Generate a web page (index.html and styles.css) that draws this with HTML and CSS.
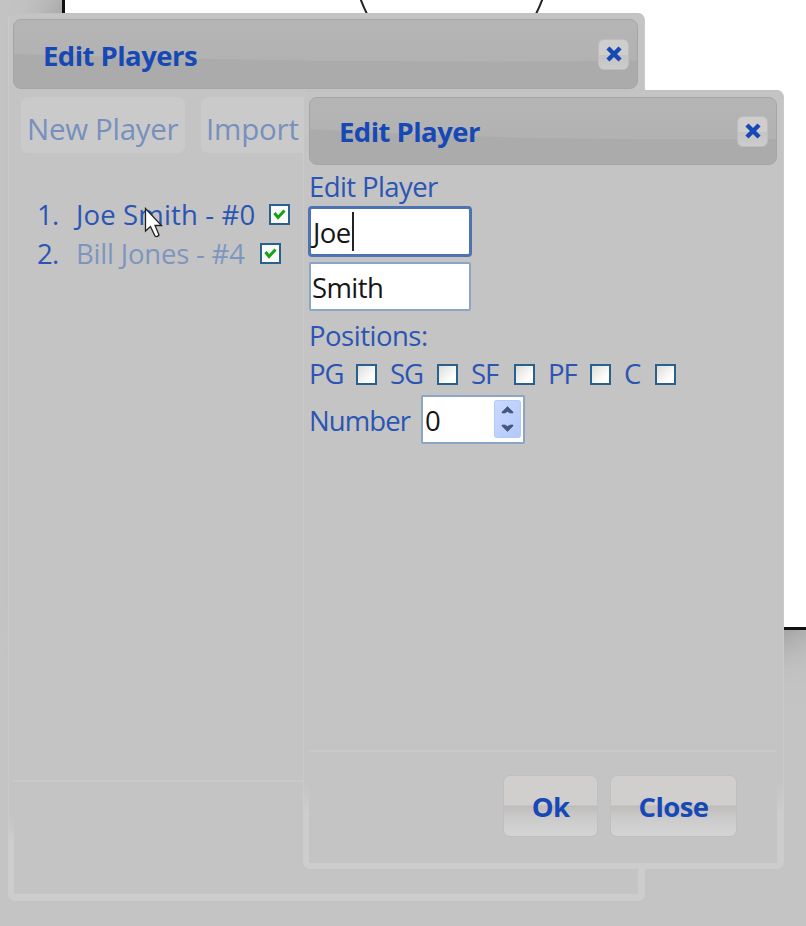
FILE: index.html
```html
<!DOCTYPE html>
<html lang="en">
<head>
<meta charset="utf-8">
<title>Edit Players</title>
<link rel="stylesheet" href="styles.css">
</head>
<body>
<div class="court">
  <svg width="741" height="20" viewBox="65 0 741 20" fill="none" stroke="#222" stroke-width="2"><path d="M360.500-1Q363.500 7 367 14M542.500-1Q539.500 7 536 14"/></svg>
</div>

<section class="dialog players">
  <header class="titlebar">
    <svg class="sheen" viewBox="0 0 100 100" preserveAspectRatio="none"><path d="M0 50Q45 64 100 60V100H0Z" fill="#ababab"/></svg>
    <h1>Edit Players</h1>
    <button class="x"><svg width="16" height="16" viewBox="0 0 16 16"><path d="M3.500 3.500L12.500 12.500M12.500 3.500L3.500 12.500" stroke="#1649b5" stroke-width="4.400" stroke-linecap="square"/></svg></button>
  </header>
  <nav class="tools"><span class="tool new">New Player</span><span class="tool import">Import</span></nav>
  <div class="roster">
    <div class="row"><span class="num">1.</span><span class="name n1">Joe Smith - #0</span><i class="box"><svg width="17" height="17" viewBox="0 0 17 17"><path d="M3.500 7L7 11.500L13.500 4.500" fill="none" stroke="#16a016" stroke-width="3"/></svg></i></div>
    <div class="row"><span class="num">2.</span><span class="name n2">Bill Jones - #4</span><i class="box"><svg width="17" height="17" viewBox="0 0 17 17"><path d="M3.500 7L7 11.500L13.500 4.500" fill="none" stroke="#16a016" stroke-width="3"/></svg></i></div>
  </div>
  <div class="rule"></div>
</section>

<section class="dialog player">
  <header class="titlebar">
    <svg class="sheen" viewBox="0 0 100 100" preserveAspectRatio="none"><path d="M0 47Q45 66 100 62V100H0Z" fill="#ababab"/></svg>
    <h1>Edit Player</h1>
    <button class="x"><svg width="16" height="16" viewBox="0 0 16 16"><path d="M3.500 3.500L12.500 12.500M12.500 3.500L3.500 12.500" stroke="#1649b5" stroke-width="4.400" stroke-linecap="square"/></svg></button>
  </header>
  <div class="form">
    <div class="label">Edit Player</div>
    <div class="field focus"><span>Joe</span><i class="caret"></i></div>
    <div class="field"><span>Smith</span></div>
    <div class="label positions">Positions:</div>
    <div class="checks">
      <label>PG<i class="box"></i></label><label>SG<i class="box"></i></label><label>SF<i class="box"></i></label><label>PF<i class="box"></i></label><label>C<i class="box"></i></label>
    </div>
    <div class="number"><span class="numlabel">Number</span><div class="field spin"><span>0</span>
      <svg width="27" height="38" viewBox="0 0 27 38"><defs><linearGradient id="g" x2="1" y2="1"><stop stop-color="#cbd9ff"/><stop offset="1" stop-color="#b2c8fa"/></linearGradient></defs><rect x=".5" y=".5" width="26" height="37" rx="2" fill="url(#g)" stroke="#b5c9f5"/><path d="M13.500 6.500L19 12V13H16L13.500 11.500L11 13H8V12ZM13.500 31.500L19 26V25H16L13.500 26.500L11 25H8V26Z" fill="#43587c" stroke="#43587c" stroke-width=".6"/></svg></div></div>
  </div>
  <div class="rule"></div>
  <footer><button class="btn ok">Ok</button><button class="btn close">Close</button></footer>
</section>

<svg class="pointer" width="20" height="32" viewBox="0 0 20 32"><path d="M1.500 1.500V24L6.500 19.500L11 29Q13 30.500 15 28L11 18.500H17.500Z" fill="#fff" stroke="#222" stroke-width="1.300"/></svg>
</body>
</html>
```
FILE: styles.css
```css
* { box-sizing: border-box; }
body {
  margin: 0;
  width: 806px;
  height: 926px;
  overflow: hidden;
  position: relative;
  background: #c4c4c4;
  font: 27.5px/38px "Open Sans", "Noto Sans", sans-serif;
  letter-spacing: -.6px;
  color: #2b55b4;
}
.court {
  margin-left: 62px;
  width: 744px;
  height: 630px;
  background: #fff;
  border: solid #111;
  border-width: 0 0 3px 3px;
  box-shadow: 0 0 50px #777;
}
.court svg { display: block; }
.dialog {
  position: absolute;
  background: #c4c4c4;
  border: 1px solid #cacaca;
  border-top-color: #c1c1c1;
  border-radius: 7px;
  display: flex;
  flex-direction: column;
}
.dialog::after {
  content: "";
  position: absolute;
  inset: -1px;
  border: 6px solid #cdcdcd;
  border-top: 0;
  border-radius: 7px;
  pointer-events: none;
}
.players { left: 8px; top: 13px; width: 637px; height: 888px; padding: 5px 6px 0 4px; }
.players::after { border-bottom-width: 7px; border-right-width: 7px; mask-image: linear-gradient(transparent 800px, #000 830px); }
.player { left: 303px; top: 90px; width: 481px; height: 779px; padding: 6px 6px 0 5px; }
.player::after { border-right-width: 7px; mask-image: linear-gradient(transparent 690px, #000 725px); }
.titlebar {
  position: relative;
  flex: none;
  display: flex;
  align-items: center;
  justify-content: space-between;
  height: 70px;
  padding: 0 8px 0 29px;
  border: 1px solid #a5a5a5;
  border-radius: 8px;
  background: linear-gradient(#b5b5b5, #b0b0b0);
  overflow: hidden;
}
.player .titlebar { height: 68px; }
.player h1 { margin-top: 2px; }
.sheen { position: absolute; left: 0; top: 0; width: 100%; height: 100%; }
h1 {
  position: relative;
  margin: 3px 0 0;
  font-size: 27.5px;
  font-weight: 700;
  letter-spacing: -.55px;
  color: #1649b5;
}
button { border: 0; padding: 0; font-family: inherit; }
.x {
  position: relative;
  width: 31px;
  height: 31px;
  border: 1px solid #bdbdbd;
  border-radius: 6px;
  background: linear-gradient(#d0cdcd 50%, #c5c2c2 52%, #cdcdcd);
  display: flex;
  align-items: center;
  justify-content: center;
}
.tools { display: flex; gap: 16px; margin: 8px 0 0 8px; height: 56px; }
.tool {
  height: 56px;
  padding: 4px 0 0 6px;
  line-height: 56px;
  font-size: 29.5px;
  letter-spacing: -.2px;
  border-radius: 7px;
  background: #cacaca;
  color: #7790bd;
  white-space: nowrap;
}
.new { width: 164px; letter-spacing: -.3px; }
.import { width: 110px; padding-left: 5px; }
.roster { margin: 42px 0 0 24px; }
.row { display: flex; align-items: center; height: 39px; }
.num { width: 39px; }
.name { white-space: nowrap; width: 193px; letter-spacing: .15px; }
.n2 { width: 184px; letter-spacing: -.2px; color: #7e95c0; }
.box {
  flex: none;
  width: 21px;
  height: 21px;
  border: 2px solid #28618f;
  background: linear-gradient(135deg, #dcdcd7, #fff 75%);
}
.row .box { background: #fafafa; }
.box svg { display: block; }
.rule { height: 2px; background: #c9c9c9; }
.players .rule { margin-top: 507px; }
.form { height: 585px; padding: 3px 0 0; }
.label { height: 37px; line-height: 37px; }
.field {
  display: flex;
  align-items: center;
  width: 162px;
  height: 49px;
  padding: 3px 0 0 1px;
  border: 2px solid #8ba6c4;
  border-radius: 2px;
  background: #fff;
  color: #161616;
}
.focus { width: 164px; height: 51px; margin: 1px 0 5px -1px; padding-left: 2px; border: 3px solid #4d73b5; border-radius: 4px; }
.caret { width: 2px; height: 39px; background: #222; margin: -4px 0 0 1px; }
.positions { margin-top: 6px; letter-spacing: -.5px; }
.checks { display: grid; grid-template-columns: 81px 81px 77px 76px 64px; height: 40px; letter-spacing: -1px; }
.checks label { display: flex; align-items: center; justify-content: space-between; padding-right: 13px; }
.checks label:last-child { padding-right: 12px; }
.number { display: flex; align-items: center; margin-top: 1px; }
.numlabel { width: 112px; padding-top: 3px; letter-spacing: -.9px; }
.spin { width: 104px; justify-content: space-between; padding: 0 2px 0 2px; }
.spin span { padding-top: 2px; }
.spin svg { margin-top: -1px; }
footer { display: flex; justify-content: flex-end; gap: 12px; padding: 23px 40px 0 0; }
.btn {
  height: 62px;
  padding-top: 1px;
  font-size: 27.5px;
  font-weight: 700;
  letter-spacing: -.6px;
  color: #1649b5;
  border: 1px solid #bfbfbf;
  border-radius: 7px;
  background: linear-gradient(#d1cece 48%, #bfbcbc 50%, #cdcccc 72%, #d4d4d4);
}
.ok { width: 95px; }
.close { width: 127px; }
.pointer { position: absolute; left: 144px; top: 207px; }
```
